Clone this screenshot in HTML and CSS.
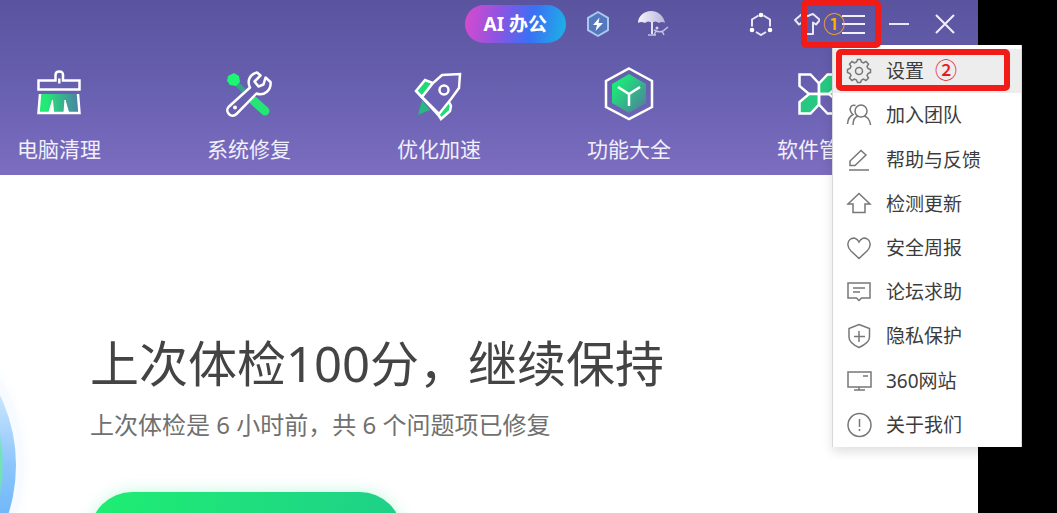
FILE: index.html
```html
<!DOCTYPE html>
<html lang="zh-CN">
<head>
<meta charset="utf-8">
<title>电脑体检</title>
<link rel="stylesheet" href="styles.css">
</head>
<body>
<div class="app">
  <header class="header">
    <div class="titlebar">
      <div class="promos">
        <button class="ai-pill" type="button">AI 办公</button>
        <button class="promo" type="button" aria-label="加速">
          <svg width="26" height="28" viewBox="0 0 26 28"><path d="M13 2 23 7.800V20.200L13 26 3 20.200V7.800Z" fill="#5577bd" stroke="#a9c8ee" stroke-width="2" stroke-linejoin="round"/><path d="M14.500 7.500 8 15h4l-1.500 6L18 13h-4.500Z" fill="#fff"/></svg>
        </button>
        <button class="promo" type="button" aria-label="度假">
          <svg width="34" height="30" viewBox="0 0 34 30"><defs><linearGradient id="um" x1="0" x2="1"><stop offset="0" stop-color="#f4f3fb"/><stop offset="1" stop-color="#b9b4da"/></linearGradient></defs><path d="M2 14C2 7 8 2 15 2c8 0 13 6 14 12q-3-2-6 0-4-3-7 0-4-3-7 0-4-2-7 0Z" fill="url(#um)"/><path d="M16 13v12" stroke="#e6e2f5" stroke-width="2"/><path d="M12 26h8M18 21q5 3 9 1l5-4M20 22l-2 4M26 22l2 4" stroke="#c6c0e2" stroke-width="1.500" fill="none"/><circle cx="21" cy="19" r="1.500" fill="#d9d5ee"/></svg>
        </button>
      </div>
      <div class="controls">
        <button class="control" type="button" aria-label="社区">
          <svg width="24" height="24" viewBox="0 0 24 24" fill="none" stroke="#e9e6f8" stroke-width="2"><path d="M9.500 3.500 3 7.500v7M14.500 3.500 21 7.500v7M7 20l5 3 5-3"/><g fill="#fff" stroke="none"><circle cx="12" cy="3" r="2.300"/><circle cx="3" cy="18" r="2.300"/><circle cx="21" cy="18" r="2.300"/></g></svg>
        </button>
        <button class="control" type="button" aria-label="皮肤">
          <svg width="26" height="24" viewBox="0 0 26 24" fill="none" stroke="#e9e6f8" stroke-width="2" stroke-linejoin="round"><path d="M8 2 1 8l4 4.500 3-2V22h11V10.500l3 2L26 8l-7-6-3 1q-2.500 2-5 0Z"/></svg>
        </button>
        <button class="control" type="button" aria-label="主菜单">
          <svg width="24" height="24" viewBox="0 0 24 24" stroke="#f2f0fb" stroke-width="2"><path d="M1 4h23M1 12h23M1 21h23"/></svg>
        </button>
        <button class="control" type="button" aria-label="最小化">
          <svg width="20" height="24" viewBox="0 0 20 24" stroke="#e9e6f8" stroke-width="2"><path d="M0 12h20"/></svg>
        </button>
        <button class="control" type="button" aria-label="关闭">
          <svg width="20" height="20" viewBox="0 0 20 20" stroke="#f2f0fb" stroke-width="2"><path d="M1 1 19 19M19 1 1 19"/></svg>
        </button>
      </div>
    </div>
    <nav class="nav">
      <a class="nav-item" href="#clean">
        <svg width="56" height="56" viewBox="0 0 56 56" fill="none" stroke="#fff" stroke-width="2.500"><defs><linearGradient id="g1" x1="0" x2="1"><stop offset="0.200" stop-color="#22ea74"/><stop offset="1" stop-color="#3f8fa0" stop-opacity=".7"/></linearGradient></defs><path d="M8.500 28h39l1 18h-41Z" fill="url(#g1)" stroke="none"/><path d="M9 28 7.500 47h41L47 28"/><path d="m18 46 3.500-12 1 12ZM33 46l1-12 3.500 12Z" fill="#fff" stroke-width="1"/><path d="M7.500 14.500h17V9q0-3.500 3.800-3.500T32 9v5.500h16.500v9h-41ZM28.300 17.500v-5"/></svg>
        <span>电脑清理</span>
      </a>
      <a class="nav-item" href="#repair">
        <svg width="56" height="56" viewBox="0 0 56 56" fill="none"><path d="m15 17 8 8" stroke="#37a28d" stroke-width="5"/><path d="m33 35 11 10" stroke="#25e576" stroke-width="9" stroke-linecap="round"/><path d="m7 10 6-3 5 3 1 6-4 4-6-1-3-4Z" fill="#1ef574"/><path d="M36 6.500c-8 2-10 9-7 15L7.500 41c-4 5 3 12 8 7l20-20.500c8 3 15-4 14-11.500l-5-4.500-2 7-5 2-4-5 6-6Z" fill="#695fb0" stroke="#fff" stroke-width="2.500" stroke-linejoin="round"/><circle cx="14" cy="41.500" r="2" fill="#fff"/></svg>
        <span>系统修复</span>
      </a>
      <a class="nav-item" href="#speed">
        <svg width="56" height="56" viewBox="0 0 56 56" fill="none" stroke="#fff" stroke-width="2.500"><path d="m11 34-4 15 12-5Z" fill="#29b784" stroke="none"/><path d="M5 25 14 14l8 3-11 14ZM25 45 37 34l3 6-1 5-9 8Z" fill="#20da77"/><path d="M11 31 22 17l9-8 18-1-1 14-8 11-12 15Z" fill="#6c62b5"/><path d="m5 25 25 27"/><circle cx="33" cy="24" r="4.500"/></svg>
        <span>优化加速</span>
      </a>
      <a class="nav-item" href="#tools">
        <svg width="56" height="56" viewBox="0 0 56 56" fill="none"><defs><linearGradient id="g2" x1="0" y1="0" x2="1" y2="1"><stop offset="0.200" stop-color="#1be878"/><stop offset="1" stop-color="#55749f"/></linearGradient></defs><path d="M28 2.500 51 15v26L28 53 5 41V15Z" stroke="#fff" stroke-width="2.500"/><path d="m28 8 17 10v19l-17 10-17-10V18Z" fill="url(#g2)"/><path d="m17 21 11 7 11-7M28 28v12" stroke="#fff" stroke-width="2.500"/></svg>
        <span>功能大全</span>
      </a>
      <a class="nav-item" href="#software">
        <svg width="56" height="56" viewBox="0 0 56 56" fill="none" stroke="#fff" stroke-width="2.500"><path d="M8.500 8.500h11l8.500 9V28H18l-9.500-8Z"/><path d="M47.500 8.500h-11L28 17.500V28h10l9.500-8ZM8.500 47.500h11l8.500-9V28H18l-9.500 8Z" fill="#27c982"/><path d="M47.500 47.500h-11L28 38.500V28h10l9.500 8Z"/></svg>
        <span>软件管家</span>
      </a>
    </nav>
  </header>
  <main class="main">
    <div class="gauge"></div>
    <h1 class="title">上次体检100分，继续保持</h1>
    <p class="summary">上次体检是 6 小时前，共 6 个问题项已修复</p>
    <button class="scan" type="button" aria-label="立即体检"></button>
  </main>
</div>

<div class="menu" role="menu">
  <button class="menu-item active" type="button" role="menuitem"><svg class="icon" viewBox="0 0 26 26"><path d="M10.500 4 11.500 1.500h3l1 2.500 2 1 2.500-1.500 2.500 2.500L21 8.500l1 2 2.500 1v3l-2.500 1-1 2 1.500 2.500-2.500 2.500-2.500-1.500-2 1-1 2.500h-3l-1-2.500-2-1L6 22.500 3.500 20 5 17.500l-1-2-2.500-1v-3l2.500-1 1-2L3.500 6 6 3.500 8.500 5Z"/><circle cx="13" cy="13" r="3.500"/></svg>设置</button>
  <button class="menu-item" type="button" role="menuitem"><svg class="icon" viewBox="0 0 26 26"><circle cx="15" cy="9" r="6"/><path d="M7 23c0-5 2-8 5-9M18 14c4 1 6 4 6.500 9M9.500 3.500C5 2 3.500 6 4.500 9q.5 2 2.500 3.500-5 2.500-5.500 9.500"/></svg>加入团队</button>
  <button class="menu-item" type="button" role="menuitem"><svg class="icon" viewBox="0 0 26 26"><path d="M4 18.500V14L15 3.500l5 4.500L9 18.500ZM3 23h20"/></svg>帮助与反馈</button>
  <button class="menu-item" type="button" role="menuitem"><svg class="icon" viewBox="0 0 26 26"><path d="M13 2.500 24 13h-5v8.500H7V13H2Z"/></svg>检测更新</button>
  <button class="menu-item" type="button" role="menuitem"><svg class="icon" viewBox="0 0 26 26"><path d="M13 23.500 5 16C1 12 1 7 4 4.500S11 3 13 7c2-4 6-5 9-2.500s3 7.500-1 11.500Z"/></svg>安全周报</button>
  <button class="menu-item" type="button" role="menuitem"><svg class="icon" viewBox="0 0 26 26"><path d="M2 4h22v15h-8.500L13 21.500 10.500 19H2ZM7 9h12M7 13h7"/></svg>论坛求助</button>
  <button class="menu-item" type="button" role="menuitem"><svg class="icon" viewBox="0 0 26 26"><path d="m13 1.500 10.500 4V14c0 5-5 8-10.500 10.500C7.500 22 3 19 3 14V5.500ZM13 8v11M8 13.500h11"/></svg>隐私保护</button>
  <button class="menu-item" type="button" role="menuitem"><svg class="icon" viewBox="0 0 26 26"><path d="M2 4h23v15H2ZM17 8h5M13 19v3M8 22h11"/></svg>360网站</button>
  <button class="menu-item" type="button" role="menuitem"><svg class="icon" viewBox="0 0 26 26"><circle cx="13.500" cy="13" r="11.500"/><path d="M13.500 7v8M13.500 17v2"/></svg>关于我们</button>
</div>

<div class="mark mark-one">①</div>
<div class="mark mark-two">②</div>
</body>
</html>
```

FILE: styles.css
```css
* {
  box-sizing: border-box;
}

body {
  margin: 0;
  height: 100vh;
  overflow: hidden;
  position: relative;
  background: #000;
  font-family: "Noto Sans", "Noto Sans CJK SC", sans-serif;
}

button {
  margin: 0;
  padding: 0;
  border: 0;
  background: none;
  color: inherit;
  font: inherit;
}

svg {
  display: block;
  flex: none;
}

.app {
  display: flex;
  flex-direction: column;
  height: 100vh;
  margin-right: 79px;
  background: #fff;
}

.header {
  flex: none;
  padding-bottom: 8px;
  background: linear-gradient(#5a549f, #6961b1 55%, #7c6dc0);
}

.titlebar {
  display: flex;
  justify-content: flex-end;
  gap: 68px;
  height: 47px;
  padding-right: 10px;
}

.promos,
.controls {
  display: flex;
  align-items: center;
}

.promos {
  gap: 19px;
}

.ai-pill {
  height: 38px;
  padding: 0 19px;
  border-radius: 19px;
  background: linear-gradient(100deg, #db49cc, #8b55e2 35%, #3a70f4 65%, #1bb4e6);
  color: #fff;
  font-size: 19px;
  font-weight: 700;
  line-height: 38px;
}

.promo {
  display: flex;
}

.promo + .promo {
  margin-left: 6px;
}

.control {
  display: flex;
  align-items: center;
  justify-content: center;
  width: 46px;
  height: 46px;
}

.nav {
  display: flex;
  gap: 106px;
  height: 120px;
  padding: 19px 0 0 17px;
  overflow: hidden;
}

.nav-item {
  display: flex;
  flex: none;
  flex-direction: column;
  align-items: center;
  gap: 11px;
  width: 84px;
  color: #f1effb;
  font-size: 21px;
  line-height: 32px;
  text-decoration: none;
  white-space: nowrap;
}

.main {
  position: relative;
  flex: 1;
  min-height: 0;
  padding: 156px 0 0 90px;
  overflow: hidden;
}

.gauge {
  position: absolute;
  top: 129px;
  left: -306px;
  width: 322px;
  height: 322px;
  border-radius: 50%;
  background:
    radial-gradient(circle, #72e3b4 146px, transparent 149px),
    linear-gradient(#e0f2fe 20%, #8cc5fb 50%, #5fb0f8 75%);
  box-shadow: 0 0 0 8px #f7fbff, 0 0 8px 12px #fafcff;
}

.title {
  margin: 0;
  color: #444;
  font-size: 49px;
  font-weight: 400;
  line-height: 64px;
  white-space: nowrap;
}

.summary {
  margin: 12px 0 49px;
  color: #707070;
  font-size: 24px;
  line-height: 36px;
  white-space: nowrap;
}

.scan {
  display: block;
  width: 312px;
  height: 84px;
  border-radius: 42px;
  background: linear-gradient(100deg, #1eee72, #1fcf89);
  box-shadow: 0 0 16px rgba(30, 220, 130, 0.25);
}

.menu {
  position: absolute;
  top: 45px;
  left: 832px;
  display: grid;
  grid-auto-rows: 1fr;
  width: 190px;
  height: 402px;
  padding-top: 4px;
  border: solid #d8d8d8;
  border-width: 0 1px;
  background: #fff;
  box-shadow: 0 5px 10px rgba(0, 0, 0, 0.12);
}

.menu-item {
  display: flex;
  align-items: center;
  gap: 14px;
  padding-left: 13px;
  color: #3c3c3c;
  font-size: 19px;
  line-height: 28px;
  text-align: left;
}

.menu-item.active {
  background: #ededed;
}

.icon {
  width: 26px;
  height: 26px;
  fill: none;
  stroke: #777;
  stroke-width: 1.5;
}

.mark {
  position: absolute;
  border: 6px solid #f11c17;
  border-radius: 5px;
  font-family: "Noto Sans CJK SC", sans-serif;
  font-size: 22px;
  font-weight: 500;
  line-height: 26px;
}

.mark-one {
  top: 0;
  left: 801px;
  width: 80px;
  height: 48px;
  padding: 3px 0 0 16px;
  color: #ffb000;
}

.mark-two {
  top: 49px;
  left: 836px;
  width: 174px;
  height: 42px;
  padding-left: 93px;
  color: #e81b1b;
}
```
